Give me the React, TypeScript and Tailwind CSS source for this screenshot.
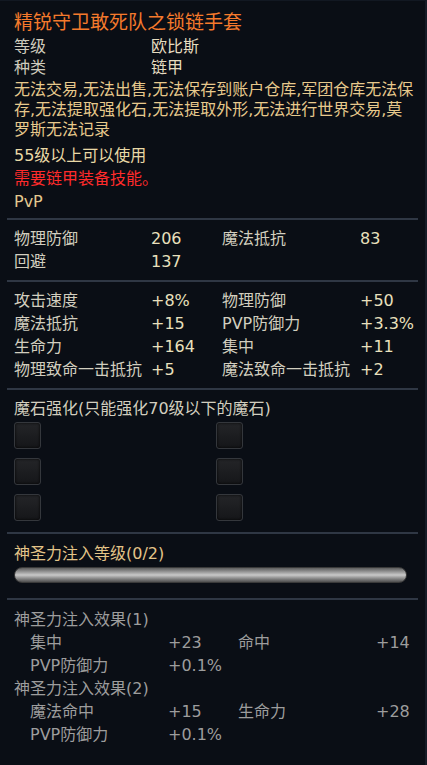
import React from "react";

const font = "font-['DejaVu_Sans','Noto_Sans_CJK_SC',sans-serif]";

type Stat = [string, string];

const baseStats: Stat[][] = [
  [
    ["物理防御", "206"],
    ["魔法抵抗", "83"],
  ],
  [["回避", "137"]],
];

const bonusStats: Stat[][] = [
  [
    ["攻击速度", "+8%"],
    ["物理防御", "+50"],
  ],
  [
    ["魔法抵抗", "+15"],
    ["PVP防御力", "+3.3%"],
  ],
  [
    ["生命力", "+164"],
    ["集中", "+11"],
  ],
  [
    ["物理致命一击抵抗", "+5"],
    ["魔法致命一击抵抗", "+2"],
  ],
];

const holyOne: Stat[][] = [
  [
    ["集中", "+23"],
    ["命中", "+14"],
  ],
  [["PVP防御力", "+0.1%"]],
];

const holyTwo: Stat[][] = [
  [
    ["魔法命中", "+15"],
    ["生命力", "+28"],
  ],
  [["PVP防御力", "+0.1%"]],
];

const Divider = () => <div className="mx-[7px] h-[2px] bg-[#2f3744]" />;

const StatRows = ({ rows }: { rows: Stat[][] }) => (
  <div className="grid grid-cols-[137px_71px_138px_1fr] pl-[14px] text-[16px] leading-[23px]">
    {rows.map((row, i) => (
      <React.Fragment key={i}>
        {[0, 1].map((j) =>
          row[j] ? (
            <React.Fragment key={j}>
              <span className="text-[#d2cebf] whitespace-nowrap">{row[j][0]}</span>
              <span className="text-[#e9e0bd]">{row[j][1]}</span>
            </React.Fragment>
          ) : (
            <React.Fragment key={j}>
              <span />
              <span />
            </React.Fragment>
          )
        )}
      </React.Fragment>
    ))}
  </div>
);

const HolyRows = ({ rows }: { rows: Stat[][] }) => (
  <div className="grid grid-cols-[138px_70px_138px_1fr] pl-[30px] text-[16px] leading-[23px] text-[#9d9d9d]">
    {rows.map((row, i) => (
      <React.Fragment key={i}>
        {[0, 1].map((j) =>
          row[j] ? (
            <React.Fragment key={j}>
              <span className="whitespace-nowrap">{row[j][0]}</span>
              <span>{row[j][1]}</span>
            </React.Fragment>
          ) : (
            <React.Fragment key={j}>
              <span />
              <span />
            </React.Fragment>
          )
        )}
      </React.Fragment>
    ))}
  </div>
);

const Slot = () => (
  <div className="w-[27px] h-[27px] rounded-[3px] border border-[#34373c] bg-linear-to-b from-[#242528] to-[#151619] shadow-[inset_0_0_3px_rgba(0,0,0,0.9)]" />
);

const App = () => {
  return (
    <div
      className={`${font} w-[427px] h-[765px] overflow-hidden bg-[#0a0e15] border-t border-t-[#121822] border-r-2 border-r-[#161c27]`}
    >
      <div className="pt-[9px] pl-[14px]">
        <div className="text-[19px] leading-[24px] text-[#f57a2c]">
          精锐守卫敢死队之锁链手套
        </div>
        <div className="mt-[2px] grid grid-cols-[137px_1fr] text-[16px] leading-[21px]">
          <span className="text-[#cfcbbd]">等级</span>
          <span className="text-[#e6ddc0]">欧比斯</span>
          <span className="text-[#cfcbbd]">种类</span>
          <span className="text-[#e6ddc0]">链甲</span>
        </div>
        <div className="mt-[2px] text-[16px] leading-[20px] text-[#e7c98c] whitespace-nowrap">
          <div>无法交易,无法出售,无法保存到账户仓库,军团仓库无法保</div>
          <div>存,无法提取强化石,无法提取外形,无法进行世界交易,莫</div>
          <div>罗斯无法记录</div>
        </div>
        <div className="mt-[4px] text-[16px] leading-[23px]">
          <div className="text-[#e9d9a6]">55级以上可以使用</div>
          <div className="text-[#ff2b2b]">需要链甲装备技能。</div>
          <div className="text-[#e3c98f]">PvP</div>
        </div>
      </div>

      <div className="mt-[5px]">
        <Divider />
      </div>
      <div className="pt-[7px] pb-[7px]">
        <StatRows rows={baseStats} />
      </div>
      <Divider />
      <div className="pt-[7px] pb-[7px]">
        <StatRows rows={bonusStats} />
      </div>
      <Divider />

      <div className="pl-[14px] pt-[7px]">
        <div className="text-[16px] leading-[23px] text-[#d2cebf]">
          魔石强化(只能强化70级以下的魔石)
        </div>
        <div className="mt-[2px] grid grid-cols-[202px_1fr] gap-y-[9px] pb-[11px]">
          <Slot />
          <Slot />
          <Slot />
          <Slot />
          <Slot />
          <Slot />
        </div>
      </div>
      <Divider />

      <div className="pl-[14px] pr-[18px] pt-[8px] pb-[15px]">
        <div className="text-[16px] leading-[23px] text-[#e3c488]">
          神圣力注入等级(0/2)
        </div>
        <div className="mt-[2px] h-[16px] rounded-full border border-[#3a3a3a] bg-linear-to-b from-[#5e5e5e] via-[#c9c9c9] to-[#4f4f4f]" />
      </div>
      <Divider />

      <div className="pt-[8px]">
        <div className="pl-[14px] text-[16px] leading-[23px] text-[#9d9d9d]">
          神圣力注入效果(1)
        </div>
        <HolyRows rows={holyOne} />
        <div className="pl-[14px] text-[16px] leading-[23px] text-[#9d9d9d]">
          神圣力注入效果(2)
        </div>
        <HolyRows rows={holyTwo} />
      </div>
    </div>
  );
};

export default App;
